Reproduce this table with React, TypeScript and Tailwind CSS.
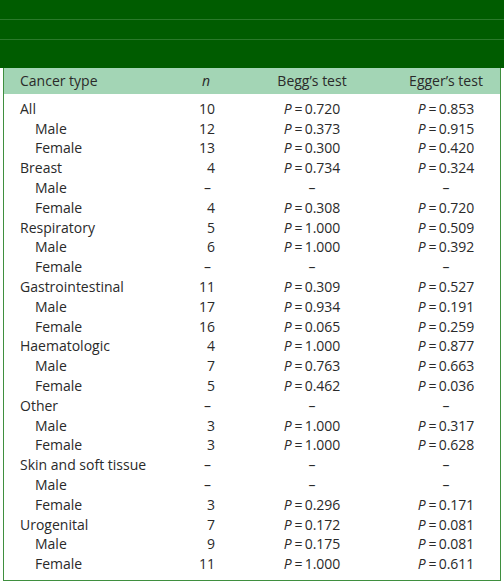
import React from 'react'

type Row = { label: string; sub?: boolean; n: string; begg: string; egger: string }

const rows: Row[] = [
  { label: 'All', n: '10', begg: '0.720', egger: '0.853' },
  { label: 'Male', sub: true, n: '12', begg: '0.373', egger: '0.915' },
  { label: 'Female', sub: true, n: '13', begg: '0.300', egger: '0.420' },
  { label: 'Breast', n: '4', begg: '0.734', egger: '0.324' },
  { label: 'Male', sub: true, n: '–', begg: '', egger: '' },
  { label: 'Female', sub: true, n: '4', begg: '0.308', egger: '0.720' },
  { label: 'Respiratory', n: '5', begg: '1.000', egger: '0.509' },
  { label: 'Male', sub: true, n: '6', begg: '1.000', egger: '0.392' },
  { label: 'Female', sub: true, n: '–', begg: '', egger: '' },
  { label: 'Gastrointestinal', n: '11', begg: '0.309', egger: '0.527' },
  { label: 'Male', sub: true, n: '17', begg: '0.934', egger: '0.191' },
  { label: 'Female', sub: true, n: '16', begg: '0.065', egger: '0.259' },
  { label: 'Haematologic', n: '4', begg: '1.000', egger: '0.877' },
  { label: 'Male', sub: true, n: '7', begg: '0.763', egger: '0.663' },
  { label: 'Female', sub: true, n: '5', begg: '0.462', egger: '0.036' },
  { label: 'Other', n: '–', begg: '', egger: '' },
  { label: 'Male', sub: true, n: '3', begg: '1.000', egger: '0.317' },
  { label: 'Female', sub: true, n: '3', begg: '1.000', egger: '0.628' },
  { label: 'Skin and soft tissue', n: '–', begg: '', egger: '' },
  { label: 'Male', sub: true, n: '–', begg: '', egger: '' },
  { label: 'Female', sub: true, n: '3', begg: '0.296', egger: '0.171' },
  { label: 'Urogenital', n: '7', begg: '0.172', egger: '0.081' },
  { label: 'Male', sub: true, n: '9', begg: '0.175', egger: '0.081' },
  { label: 'Female', sub: true, n: '11', begg: '1.000', egger: '0.611' },
]

const PValue = ({ v }: { v: string }) =>
  v ? (
    <span>
      <i>P</i>
      <span className="ml-[3px] mr-[2px]">=</span>
      {v}
    </span>
  ) : (
    <span>–</span>
  )

export default function App() {
  return (
    <div
      className="w-[504px] h-[583px] bg-white text-[#2a2a2a] text-[14px] leading-none"
      style={{ fontFamily: '"Open Sans", sans-serif' }}
    >
      {/* top band */}
      <div className="bg-[#005c00]">
        <div className="h-[20px] border-b border-[#2a7a2a]" />
        <div className="h-[20px] border-b border-[#2a7a2a]" />
        <div className="h-[28px]" />
      </div>

      <div className="ml-[3px] w-[498px] border-x border-b border-[#3f8f3f] pb-[6px]">
        <div className="grid grid-cols-[154px_58px_170px_114px] items-center h-[26px] bg-[#a3d5b5]">
          <div className="pl-[16px]">Cancer type</div>
          <div className="text-right pr-[6px] italic">n</div>
          <div className="text-center pl-[22px] whitespace-nowrap">Begg’s test</div>
          <div className="text-center pl-[6px] whitespace-nowrap">Egger’s test</div>
        </div>
        <div className="pt-[5px]">
          {rows.map((r, i) => (
            <div key={i} className="grid grid-cols-[154px_58px_170px_114px] items-center h-[19.8px]">
              <div className={r.sub ? 'pl-[31px]' : 'pl-[16px]'}>{r.label}</div>
              <div className={r.n === '–' ? 'text-right pr-[5px]' : 'text-right pr-[1px]'}>{r.n}</div>
              <div className="text-center pl-[22px] whitespace-nowrap">
                <PValue v={r.begg} />
              </div>
              <div className="text-center pl-[6px] whitespace-nowrap">
                <PValue v={r.egger} />
              </div>
            </div>
          ))}
        </div>
      </div>
    </div>
  )
}
